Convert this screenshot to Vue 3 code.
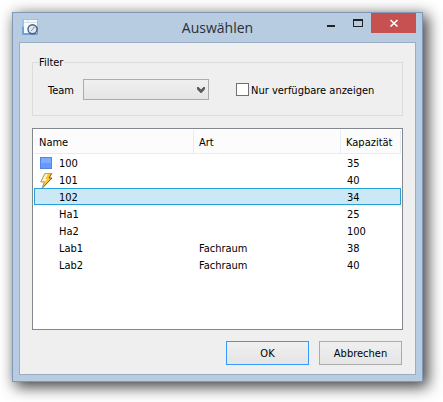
<script setup>
import { ref } from 'vue'

const team = ref('')
const onlyAvailable = ref(false)
const selected = ref('102')

const rooms = [
  { name: '100', art: '', capacity: 35, icon: 'square' },
  { name: '101', art: '', capacity: 40, icon: 'bolt' },
  { name: '102', art: '', capacity: 34 },
  { name: 'Ha1', art: '', capacity: 25 },
  { name: 'Ha2', art: '', capacity: 100 },
  { name: 'Lab1', art: 'Fachraum', capacity: 38 },
  { name: 'Lab2', art: 'Fachraum', capacity: 40 },
]
</script>

<template>
  <div class="desktop">
    <main class="window">
      <header class="titlebar">
        <svg class="app-icon" viewBox="0 0 16 16" aria-hidden="true">
          <rect width="16" height="16" rx="1" fill="#6fa0d6" />
          <rect width="16" height="8" rx="1" fill="#9cc3ea" />
          <rect x="2" y="1" width="13" height="13" fill="#f7fafd" />
          <path d="M2 3.5h13M5.5 1v2" stroke="#d5dfea" stroke-width="1" />
          <circle cx="10.5" cy="10.3" r="4.5" fill="#dfe8f1" stroke="#45607f" stroke-width="1.4" />
          <path d="M12.5 7.5l-2 3-1.5 1.3" fill="none" stroke="#7d8fa3" stroke-width="1" />
        </svg>
        <h1 class="title">Auswählen</h1>
        <div class="controls">
          <button class="control" type="button" aria-label="Minimieren">
            <svg viewBox="0 0 10 10"><path d="M1 7h8v2H1z" fill="#222" /></svg>
          </button>
          <button class="control" type="button" aria-label="Maximieren">
            <svg viewBox="0 0 10 10"><path d="M0 1h10v8H0zM1 3v5h8V3z" fill="#222" fill-rule="evenodd" /></svg>
          </button>
          <button class="control close" type="button" aria-label="Schließen">
            <svg viewBox="0 0 10 10"><path d="M1.5 2l7 6.5M8.5 2l-7 6.5" stroke="#fff" stroke-width="1.7" /></svg>
          </button>
        </div>
      </header>

      <form class="client" @submit.prevent>
        <fieldset class="filter">
          <legend>Filter</legend>
          <div class="filter-row">
            <label class="team-label" for="team">Team</label>
            <div class="combo">
              <select id="team" v-model="team"><option value=""></option></select>
              <svg class="chevron" viewBox="0 0 8 6" aria-hidden="true">
                <path d="M0 0h1.5L4 2.5 6.5 0H8v2.2L4.5 6h-1L0 2.2z" fill="#5c5c5c" />
              </svg>
            </div>
            <label class="check">
              <input v-model="onlyAvailable" type="checkbox" />
              <span>Nur verfügbare anzeigen</span>
            </label>
          </div>
        </fieldset>

        <div class="list">
          <table>
            <colgroup>
              <col />
              <col class="col-art" />
              <col class="col-capacity" />
            </colgroup>
            <thead>
              <tr><th>Name</th><th>Art</th><th>Kapazität</th></tr>
            </thead>
            <tbody>
              <tr
                v-for="room in rooms"
                :key="room.name"
                :class="{ selected: room.name === selected }"
                @click="selected = room.name"
              >
                <td>
                  <div class="name">
                    <span class="slot">
                      <svg v-if="room.icon === 'square'" viewBox="0 0 13 16" aria-hidden="true">
                        <rect x="0.5" y="1.5" width="11" height="11" fill="#6798fc" stroke="#5585dc" />
                        <rect x="1" y="2" width="10" height="5" fill="#7eabff" />
                      </svg>
                      <svg v-else-if="room.icon === 'bolt'" viewBox="0 0 13 16" aria-hidden="true">
                        <path d="M4.8 .6h7L9 5h3L2.2 15.2 4.4 9H.7z" fill="#fbc52c" />
                        <path d="M5 1h3L5.2 6h2L5 8.5H1.5z" fill="#fff3cf" />
                        <path d="M11.8 .6L9 5h3L2.2 15.2" fill="none" stroke="#7d5515" />
                        <path d="M11.8 .6h-7L.7 8.9h3.6L2.2 15" fill="none" stroke="#a39a86" />
                      </svg>
                    </span>
                    <span>{{ room.name }}</span>
                  </div>
                </td>
                <td>{{ room.art }}</td>
                <td class="capacity">{{ room.capacity }}</td>
              </tr>
            </tbody>
          </table>
        </div>

        <div class="actions">
          <button class="action primary" type="submit">OK</button>
          <button class="action" type="button">Abbrechen</button>
        </div>
      </form>
    </main>
  </div>
</template>

<style>
body {
  background: #fff;
}
</style>

<style scoped>
.desktop {
  display: flex;
  min-height: 100vh;
  padding: 12px 20px 20px 12px;
  box-sizing: border-box;
  overflow: hidden;
  color: #000;
  font-family: "DejaVu Sans Condensed", "Noto Sans", sans-serif;
  font-size: 11px;
  line-height: 15px;
}
.window {
  flex: 1;
  display: flex;
  flex-direction: column;
  padding: 0 6px 6px;
  border: 1px solid #8098b8;
  background: #b7cbe1;
  box-shadow: 4px 4px 14px 1px rgba(0, 0, 0, 0.75);
}
.titlebar {
  display: grid;
  grid-template-columns: 1fr auto 1fr;
  height: 29px;
}
.app-icon {
  width: 16px;
  height: 16px;
  margin: 6px 0 0 3px;
}
.title {
  margin: 4px 0 0;
  color: #2b2f36;
  font-family: "Open Sans", sans-serif;
  font-size: 14px;
  font-weight: 400;
  line-height: 21px;
}
.controls {
  display: flex;
  justify-content: flex-end;
  align-items: flex-start;
}
.control {
  display: flex;
  align-items: center;
  justify-content: center;
  width: 27px;
  height: 20px;
  padding: 0;
  border: 0;
  background: transparent;
}
.control svg {
  width: 10px;
  height: 10px;
}
.close {
  width: 45px;
  background: #c75050;
}
.client {
  flex: 1;
  display: flex;
  flex-direction: column;
  padding: 11px 12px 9px;
  border: 1px solid #99adc4;
  background: #efefef;
}
.filter {
  min-width: 0;
  margin: 0;
  padding: 0;
  border: 1px solid #dcdcdc;
}
legend {
  margin-left: 6px;
  padding: 1px 1px 0 0;
}
.filter-row {
  display: flex;
  align-items: center;
  padding: 9px 15px 15px;
}
.team-label {
  width: 35px;
  padding-top: 1px;
}
.combo {
  display: grid;
  align-items: center;
  width: 126px;
}
.combo > * {
  grid-area: 1 / 1;
}
select {
  appearance: none;
  width: 100%;
  height: 21px;
  padding: 0 18px 0 4px;
  border: 1px solid #acacac;
  border-radius: 0;
  background: linear-gradient(#f0f0f0, #e5e5e5);
  font: inherit;
}
.chevron {
  justify-self: end;
  width: 8px;
  height: 6px;
  margin-right: 4px;
  pointer-events: none;
}
.check {
  display: flex;
  align-items: center;
  gap: 2px;
  margin-left: 27px;
  white-space: nowrap;
}
.check input {
  appearance: none;
  width: 13px;
  height: 13px;
  margin: 0;
  border: 1px solid #707070;
  background: #fff;
}
.check input:checked {
  background: #3399ff;
}
.check span {
  padding-top: 1px;
}
.list {
  flex: 1;
  margin-top: 12px;
  padding: 1px;
  border: 1px solid #828790;
  background: #fff;
}
table {
  width: 100%;
  table-layout: fixed;
  border-collapse: separate;
  border-spacing: 0;
}
.col-art {
  width: 147px;
}
.col-capacity {
  width: 60px;
}
th {
  height: 24px;
  padding: 2px 0 0 5px;
  box-sizing: border-box;
  border-right: 1px solid #e4ecf5;
  border-bottom: 1px solid #e4ecf5;
  background: #fcfcfc;
  font-weight: 400;
  text-align: left;
}
td {
  height: 17px;
  padding: 3px 0 1px 5px;
  box-sizing: border-box;
  border: 0 solid #26a0da;
  line-height: 13px;
}
.capacity {
  padding-left: 6px;
}
.name {
  display: flex;
  align-items: center;
  gap: 2px;
  height: 13px;
}
.slot {
  display: flex;
  width: 17px;
  height: 16px;
  margin-left: 1px;
}
.slot svg {
  width: 13px;
  height: 16px;
}
.selected td {
  padding-top: 2px;
  padding-bottom: 0;
  border-width: 1px 0;
  background: #cbe8f6;
}
.selected td:first-child {
  padding-left: 4px;
  border-left-width: 1px;
}
.selected td:last-child {
  border-right-width: 1px;
}
.actions {
  display: flex;
  justify-content: flex-end;
  gap: 10px;
  margin-top: 11px;
  padding-right: 1px;
}
.action {
  width: 83px;
  height: 24px;
  padding: 0;
  border: 1px solid #acacac;
  background: linear-gradient(#f0f0f0, #e5e5e5);
  color: #000;
  font: inherit;
}
.primary {
  border-color: #3399ff;
}
</style>
